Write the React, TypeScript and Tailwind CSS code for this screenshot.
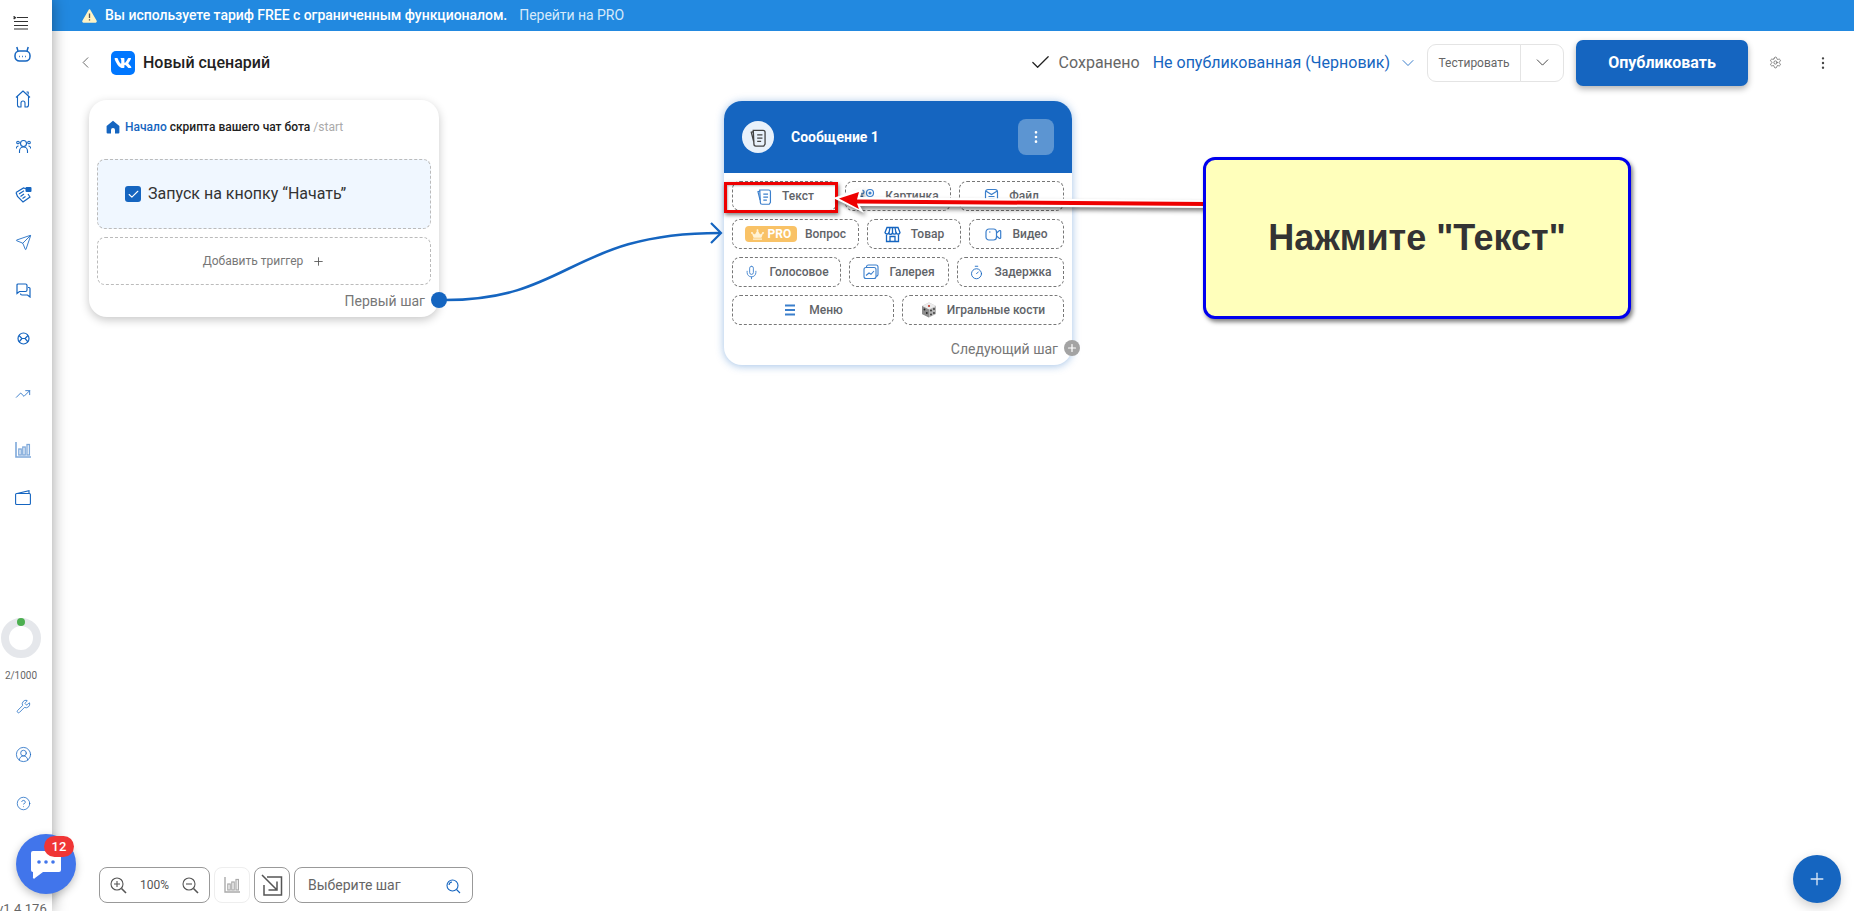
import React from 'react';
import {
  Check,
  ChevronDown,
  ChevronLeft,
  CircleHelp,
  CircleUserRound,
  EllipsisVertical,
  Plus,
  Send,
  Settings,
  Timer,
  TrendingUp,
  Wrench,
  Mic,
} from 'lucide-react';
import { FaVk, FaCrown } from 'react-icons/fa';

const ICON = 'text-[#1565c0]';

function DocStack({ size = 16, className = '' }: { size?: number; className?: string }) {
  return (
    <svg width={size} height={size} viewBox="0 0 16 16" fill="none" stroke="currentColor" strokeWidth="1" className={className}>
      <path d="M4 2.5h7.5a1.5 1.5 0 0 1 1.5 1.5v9l-1 1.5H6a1.5 1.5 0 0 1-1.5-1.5z" />
      <path d="M4.3 3.5 2.5 4l1.8 7" />
      <path d="M7 6h4M7 8.5h4M7 11h3" />
    </svg>
  );
}

function PictureIcon({ className = '' }: { className?: string }) {
  return (
    <svg width="18" height="16" viewBox="0 0 18 16" fill="none" stroke="currentColor" strokeWidth="1.2" className={className}>
      <path d="M1 13l4-5 4 5" />
      <circle cx="5" cy="4" r="2" />
      <circle cx="13" cy="5" r="3.5" />
      <circle cx="13" cy="5" r="1" fill="currentColor" />
      <path d="M1 14.5h14" />
    </svg>
  );
}

function FileIcon({ className = '' }: { className?: string }) {
  return (
    <svg width="15" height="16" viewBox="0 0 15 16" fill="none" stroke="currentColor" strokeWidth="1.2" className={className}>
      <rect x="1.5" y="1.5" width="12" height="13" rx="2.5" />
      <path d="M1.8 3 7.5 6.5 13.2 3" />
      <path d="M4.5 8.5h6M4.5 11h6" />
    </svg>
  );
}

function StoreIcon({ className = '' }: { className?: string }) {
  return (
    <svg width="17" height="17" viewBox="0 0 17 17" fill="none" stroke="currentColor" strokeWidth="1.3" className={className}>
      <path d="M3 1.5h11l2 5a2 2 0 0 1-3.7.6 2.2 2.2 0 0 1-3.8 0 2.2 2.2 0 0 1-3.9 0A2 2 0 0 1 1 6.5z" />
      <path d="M6 1.5 5 7M11 1.5l1 5.5M8.5 1.5V7" />
      <path d="M2.5 8.5V15.5h12V8.5" />
      <path d="M6 15.5v-5h5v5" />
    </svg>
  );
}

function VideoIcon({ className = '' }: { className?: string }) {
  return (
    <svg width="17" height="13" viewBox="0 0 17 13" fill="none" stroke="currentColor" strokeWidth="1.2" className={className}>
      <rect x="1" y="1" width="10.5" height="11" rx="3" />
      <path d="M4 4h1.5" />
      <path d="M11.5 5 14.5 2.6a.8.8 0 0 1 1.2.6v6.6a.8.8 0 0 1-1.2.6L11.5 8" />
    </svg>
  );
}

function GalleryIcon({ className = '' }: { className?: string }) {
  return (
    <svg width="16" height="16" viewBox="0 0 16 16" fill="none" stroke="currentColor" strokeWidth="1.1" className={className}>
      <rect x="1" y="3.5" width="12" height="11" rx="2" />
      <path d="M3.5 3.5V2.8A1.8 1.8 0 0 1 5.3 1H13a2 2 0 0 1 2 2v7.5a1.8 1.8 0 0 1-2 1.7" />
      <path d="M3 11.5 6 9l2 1.3L11 7" />
    </svg>
  );
}

function Bars({ size = 14, className = '' }: { size?: number; className?: string }) {
  return (
    <svg width={size} height={size} viewBox="0 0 14 14" fill="none" stroke="currentColor" strokeWidth="1.8" className={className}>
      <path d="M2 2.5h10M2 7h10M2 11.5h10" />
    </svg>
  );
}

function Dice() {
  return (
    <svg width="16" height="16" viewBox="0 0 16 16">
      <path d="M8 .5l7 3.5v8l-7 3.5-7-3.5V4z" fill="#b5b5b5" />
      <path d="M8 .5l7 3.5-7 3.5L1 4z" fill="#ececec" />
      <path d="M8 7.5v8l-7-3.5V4z" fill="#8c8c8c" />
      <circle cx="8" cy="4" r="1.1" fill="#c0392b" />
      <circle cx="3.5" cy="7.5" r="0.9" fill="#222" />
      <circle cx="5.8" cy="11" r="0.9" fill="#222" />
      <circle cx="10" cy="8.5" r="0.9" fill="#333" />
      <circle cx="13" cy="7" r="0.9" fill="#333" />
      <circle cx="10" cy="12.5" r="0.9" fill="#333" />
      <circle cx="13" cy="11" r="0.9" fill="#333" />
    </svg>
  );
}

function Chip({ width, icon, label, gap = 'gap-[10px]' }: { width: string; icon: React.ReactNode; label: string; gap?: string }) {
  return (
    <div
      className={`${width} ${gap} h-[30px] shrink-0 flex items-center justify-center rounded-lg border border-dashed border-[#777] text-[12px] font-medium text-[#5f6368]`}
    >
      {icon}
      <span>{label}</span>
    </div>
  );
}

function Sidebar() {
  return (
    <aside className="relative z-10 w-[52px] h-full shrink-0 bg-white shadow-[1px_0_14px_rgba(0,0,0,0.35)] flex flex-col items-center pr-[6px]">
      <svg width="16" height="14" viewBox="0 0 16 14" fill="none" stroke="#333" strokeWidth="1.1" className="mt-[16px] -ml-[4px] shrink-0">
        <path d="M4 1.5h11M1 5.5h14M1 9.5h14M1 13h14" />
        <path d="M.7 .3 2.6 1.7.7 3" fill="#333" />
      </svg>
      <svg width="17" height="16" viewBox="0 0 17 16" fill="none" stroke="#1565c0" strokeWidth="1.5" className="mt-[16px] -ml-[2px] shrink-0">
        <rect x="1" y="5" width="15" height="10" rx="4.5" />
        <path d="M4 5 2.8 1M13 5l1.2-4" />
        <path d="M5 10.5h.8M8 10.5h.8M11 10.5h.8" />
      </svg>
      <div className={`${ICON} mt-[28px] flex flex-col items-center`}>
        <div className="h-[18px] flex items-center">
          <svg width="16" height="18" viewBox="0 0 16 18" fill="none" stroke="currentColor" strokeWidth="1.1" strokeLinejoin="round">
            <path d="M1 7.5 8 1l7 6.5M2.5 6.5V15a2 2 0 0 0 2 2H6v-4a2 2 0 0 1 4 0v4h1.5a2 2 0 0 0 2-2V6.5" />
            <path d="M11.5 2h1.7v2.5" />
          </svg>
        </div>
        <div className="h-[29px]" />
        <div className="h-[18px] flex items-center">
          <svg width="15" height="15" viewBox="0 0 15 15" fill="none" stroke="currentColor" strokeWidth="1.1">
            <circle cx="7.5" cy="4.5" r="3" />
            <path d="M3.5 14v-2a4 4 0 0 1 8 0v2" />
            <circle cx="2" cy="3.5" r="1.3" />
            <circle cx="13" cy="3.5" r="1.3" />
            <path d="M.5 9.5A2 2 0 0 1 2.5 7M14.5 9.5a2 2 0 0 0-2-2.500" />
          </svg>
        </div>
        <div className="h-[30px]" />
        <div className="h-[18px] flex items-center">
          <svg width="17" height="17" viewBox="0 0 17 17" fill="none" stroke="currentColor" strokeWidth="1.2">
            <path d="M1 6.500 8.500 2 11 2.800M1 6.500 2.500 10.500 8 16 15 11 13 8" />
            <path d="M4 8 9 4.800M5.500 10.500l3.500-2.500M7.500 12.500l3-2" />
            <rect x="10.500" y="1" width="6" height="5" rx="1" fill="currentColor" stroke="none" />
          </svg>
        </div>
        <div className="h-[30px]" />
        <div className="h-[18px] flex items-center"><Send size={17} strokeWidth={1.2} /></div>
        <div className="h-[30px]" />
        <div className="h-[18px] flex items-center">
          <svg width="15" height="15" viewBox="0 0 15 15" fill="none" stroke="currentColor" strokeWidth="1.2">
            <path d="M2 1h7.500a1.500 1.500 0 0 1 1.500 1.500V7a1.500 1.500 0 0 1-1.500 1.500H3.500L1 10.500V2a1 1 0 0 1 1-1z" />
            <path d="M12 4.500h1a1 1 0 0 1 1 1V14l-2.500-2H6a1.500 1.500 0 0 1-1.500-1.500" />
          </svg>
        </div>
        <div className="h-[30px]" />
        <div className="h-[18px] flex items-center">
          <svg width="13" height="13" viewBox="0 0 13 13" fill="none" stroke="currentColor" strokeWidth="1.2">
            <circle cx="6.500" cy="6.500" r="5.500" />
            <path d="M2 3.500 5 6.500l-3 3.500M11 3.500 8 6.500l3 3.500M5 6.500h3" />
          </svg>
        </div>
        <div className="h-[38px]" />
        <div className="h-[18px] flex items-center"><TrendingUp size={16} strokeWidth={1.2} /></div>
        <div className="h-[38px]" />
        <div className="h-[18px] flex items-center">
          <svg width="16" height="16" viewBox="0 0 16 16" fill="none" stroke="#7ea8da" strokeWidth="1.3">
            <path d="M1 0v15h15" strokeWidth="1.600" />
            <rect x="3.800" y="7" width="2.400" height="6" />
            <rect x="7.800" y="5" width="2.400" height="8" />
            <rect x="12" y="2.500" width="2.400" height="10.500" />
          </svg>
        </div>
        <div className="h-[29px]" />
        <div className="h-[18px] flex items-center">
          <svg width="16" height="15" viewBox="0 0 16 15" fill="none" stroke="currentColor" strokeWidth="1.1">
            <rect x="0.600" y="3.500" width="14.800" height="11" rx="1" />
            <path d="M2 3.500 14 .8V3.500" />
          </svg>
        </div>
      </div>

      <div className="mt-auto w-full flex flex-col items-center pb-[100px]">
        <div className="relative -ml-[4px] w-[40px] h-[40px] rounded-full border-[8px] border-[#e5e7eb]">
          <div className="absolute -top-[8px] left-[8px] w-[8px] h-[8px] rounded-full bg-[#4caf50]" />
        </div>
        <div className="-ml-[4px] mt-[11px] text-[10px] leading-[14px] text-[#666]">2/1000</div>
        <Wrench size={15} strokeWidth={1.2} className={`${ICON} mt-[16px]`} />
        <CircleUserRound size={17} strokeWidth={1.1} className={`${ICON} mt-[32px]`} />
        <CircleHelp size={15} strokeWidth={1.2} className={`${ICON} mt-[33px]`} />
      </div>
    </aside>
  );
}

function Header() {
  return (
    <header className="h-[59px] shrink-0 flex items-center pt-[4px] pl-[24px] pr-[23px] bg-white">
      <ChevronLeft size={19} strokeWidth={1.1} className="text-[#555]" />
      <div className="ml-[16px] w-[24px] h-[24px] rounded-[5px] bg-[#0077ff] flex items-center justify-center">
        <FaVk size={18} className="text-white" />
      </div>
      <h1 className="ml-[8px] text-[16px] font-medium text-[#222]">Новый сценарий</h1>

      <div className="ml-auto flex items-center">
        <Check size={23} strokeWidth={1.3} className="text-[#222]" />
        <span className="ml-[7px] text-[16px] text-[#666]">Сохранено</span>
        <span className="ml-[13px] text-[16px] text-[#1565c0]">Не опубликованная (Черновик)</span>
        <ChevronDown size={20} strokeWidth={1} className="ml-[8px] text-[#1565c0]" />
        <div className="ml-[9px] w-[94px] h-[38px] rounded-l-[9px] border border-[#e4e4e4] flex items-center justify-center text-[12px] text-[#666]">
          Тестировать
        </div>
        <div className="w-[44px] h-[38px] -ml-px rounded-r-[9px] border border-[#e4e4e4] flex items-center justify-center">
          <ChevronDown size={21} strokeWidth={1} className="text-[#333]" />
        </div>
        <button className="ml-[12px] w-[172px] h-[46px] rounded-[7px] bg-[#1565c0] text-[16px] font-bold text-white shadow-[0_3px_6px_rgba(0,0,0,0.3)]">
          Опубликовать
        </button>
        <Settings size={13} strokeWidth={1.3} className="ml-[21px] text-[#555]" />
        <EllipsisVertical size={16} strokeWidth={1.6} className="ml-[33px] text-[#444]" />
      </div>
    </header>
  );
}

function StartNode() {
  return (
    <div className="absolute left-[37px] top-[10px] w-[350px] h-[217px] rounded-[18px] bg-white shadow-[0_3px_10px_rgba(0,0,0,0.22)] px-[8px]">
      <div className="h-[59px] pb-[6px] flex items-center pl-[9px] text-[12px] font-medium text-[#222]">
        <svg width="14" height="14" viewBox="0 0 14 14" className="mr-[5px] text-[#1565c0]" fill="currentColor">
          <path d="M7 .8 13.400 6v6.500a1 1 0 0 1-1 1H9V10a2 2 0 0 0-4 0v3.500H1.600a1 1 0 0 1-1-1V6z" />
        </svg>
        <span className="text-[#1565c0]">Начало</span>
        <span className="ml-[3px]">скрипта вашего чат бота</span>
        <span className="ml-[3px] font-normal text-[#aaa]">/start</span>
      </div>
      <div className="h-[70px] rounded-lg border border-dashed border-[#bbb] bg-[#f0f7ff] flex items-center pl-[27px] text-[16px] text-[#333]">
        <span className="w-[16px] h-[16px] rounded-[3px] bg-[#1565c0] flex items-center justify-center mr-[7px]">
          <Check size={13} strokeWidth={2} className="text-white" />
        </span>
        Запуск на кнопку “Начать”
      </div>
      <div className="mt-[8px] h-[48px] rounded-lg border border-dashed border-[#bbb] flex items-center justify-center gap-[9px] text-[12px] text-[#777]">
        Добавить триггер
        <Plus size={13} strokeWidth={1.6} className="text-[#555]" />
      </div>
      <div className="mt-[6px] pr-[6px] text-right text-[14px] leading-[20px] text-[#777]">Первый шаг</div>
      <div className="absolute -right-[8px] top-[192px] w-[16px] h-[16px] rounded-full bg-[#1565c0]" />
    </div>
  );
}

function MessageNode() {
  const blue = 'text-[#3b7fcc]';
  return (
    <div className="absolute left-[672px] top-[11px] w-[348px] h-[264px] rounded-[18px] bg-white shadow-[0_1px_8px_rgba(21,101,192,0.4)]">
      <div className="h-[72px] rounded-t-[18px] bg-[#1565c0] flex items-center pl-[18px] pr-[18px]">
        <div className="w-[32px] h-[32px] rounded-full bg-[#e8f1fb] flex items-center justify-center">
          <DocStack size={21} className="text-[#444]" />
        </div>
        <span className="ml-[17px] text-[14px] font-bold text-white">Сообщение 1</span>
        <div className="ml-auto w-[36px] h-[36px] rounded-lg bg-[#5c95d2] flex items-center justify-center">
          <EllipsisVertical size={16} strokeWidth={2} className="text-white" />
        </div>
      </div>
      <div className="px-[8px] pt-[8px] flex flex-col gap-[8px]">
        <div className="flex gap-[8px]">
          <Chip width="w-[105px]" gap="gap-[8px]" icon={<DocStack size={19} className={blue} />} label="Текст" />
          <Chip width="w-[106px]" icon={<PictureIcon className={blue} />} label="Картинка" />
          <Chip width="w-[105px]" icon={<FileIcon className={blue} />} label="Файл" />
        </div>
        <div className="flex gap-[8px]">
          <div className="w-[127px] h-[30px] shrink-0 flex items-center justify-center gap-[8px] rounded-lg border border-dashed border-[#777] text-[12px] font-medium text-[#5f6368]">
            <span className="w-[52px] h-[16px] rounded-[4px] bg-[#f9c266] flex items-center justify-center gap-[4px] text-[12px] font-bold text-white">
              <FaCrown size={13} className="text-[#fff3d6]" />
              PRO
            </span>
            Вопрос
          </div>
          <Chip width="w-[94px]" icon={<StoreIcon className="text-[#1565c0]" />} label="Товар" />
          <Chip width="w-[95px]" icon={<VideoIcon className={blue} />} label="Видео" />
        </div>
        <div className="flex gap-[8px]">
          <Chip width="w-[109px]" icon={<Mic size={15} strokeWidth={1.4} className={blue} />} label="Голосовое" />
          <Chip width="w-[100px]" icon={<GalleryIcon className={blue} />} label="Галерея" />
          <Chip width="w-[107px]" icon={<Timer size={15} strokeWidth={1.4} className="text-[#1565c0]" />} label="Задержка" />
        </div>
        <div className="flex gap-[8px]">
          <Chip width="w-[162px]" gap="gap-[12px]" icon={<Bars className={blue} />} label="Меню" />
          <Chip width="w-[162px]" icon={<Dice />} label="Игральные кости" />
        </div>
      </div>
      <div className="mt-[14px] pr-[14px] text-right text-[14px] leading-[20px] text-[#777]">Следующий шаг</div>
      <div className="absolute -right-[8px] top-[239px] w-[16px] h-[16px] rounded-full bg-[#a3a3a3] flex items-center justify-center">
        <Plus size={12} strokeWidth={2.4} className="text-white" />
      </div>
    </div>
  );
}

function Toolbar() {
  return (
    <div className="absolute left-[47px] bottom-[8px] flex gap-[4px] text-[#666]">
      <div className="w-[111px] h-[36px] rounded-lg border border-[#999] bg-white flex items-center justify-between px-[10px]">
        <svg width="17" height="17" viewBox="0 0 17 17" fill="none" stroke="#555" strokeWidth="1.1">
          <circle cx="7" cy="7" r="6" />
          <path d="M7 4v6M4 7h6" />
          <path d="M11.500 11.500 16 16" strokeWidth="1.600" />
        </svg>
        <span className="text-[12px] text-[#555]">100%</span>
        <svg width="17" height="17" viewBox="0 0 17 17" fill="none" stroke="#555" strokeWidth="1.1">
          <circle cx="7" cy="7" r="6" />
          <path d="M4 7h6" />
          <path d="M11.500 11.500 16 16" strokeWidth="1.600" />
        </svg>
      </div>
      <div className="w-[36px] h-[36px] rounded-lg border border-[#eee] bg-white flex items-center justify-center">
        <svg width="16" height="16" viewBox="0 0 16 16" fill="none" stroke="#aaa" strokeWidth="1.2">
          <path d="M1 0v15h15" strokeWidth="1.400" />
          <rect x="3.800" y="7" width="2.400" height="6" />
          <rect x="7.800" y="5" width="2.400" height="8" />
          <rect x="12" y="2.500" width="2.400" height="10.500" />
        </svg>
      </div>
      <div className="w-[36px] h-[36px] rounded-lg border border-[#999] bg-white flex items-center justify-center">
        <svg width="22" height="22" viewBox="0 0 22 22" fill="none" stroke="#555" strokeWidth="1.500">
          <path d="M6 3h14.500v18H3V11" />
          <path d="M1 1l15 15M16 7.500V16H7.500" />
        </svg>
      </div>
      <div className="w-[179px] h-[36px] rounded-lg border border-[#999] bg-white flex items-center justify-between pl-[13px] pr-[11px] text-[14px] text-[#666]">
        Выберите шаг
        <svg width="15" height="15" viewBox="0 0 15 15" fill="none" stroke="#1565c0" strokeWidth="1.100" className="mt-[2px]">
          <circle cx="6.500" cy="6.500" r="5.500" />
          <path d="M10.500 10.500 14 14" />
          <path d="M3 6a3.500 3.500 0 0 1 3-3" />
        </svg>
      </div>
    </div>
  );
}

function Annotation() {
  return (
    <>
      <div className="absolute left-[672px] top-[92px] w-[114px] h-[31px] border-[3px] border-[#ee0000] shadow-[1px_2px_4px_rgba(0,0,0,0.5),inset_1px_1px_2px_rgba(0,0,0,0.25)]" />
      <svg
        className="absolute inset-0 w-full h-full pointer-events-none drop-shadow-[2px_3px_2px_rgba(0,0,0,0.5)]"
        viewBox="52 90 1802 821"
      >
        <path d="M833 198 L863 188 L860 197 L1206 200 Q1209 204 1206 208 L860 206 L864 213 Z" fill="#fff" />
        <path d="M839 198.500 L859 192 L857 199.500 L1206 202 L1206 206 L857 203.500 L859 209 Z" fill="#ee0000" />
      </svg>
      <div className="absolute left-[1151px] top-[67px] w-[428px] h-[162px] rounded-[12px] border-[3px] border-[#0000ee] bg-[#ffffbb] shadow-[2px_3px_4px_rgba(0,0,0,0.5)] flex items-center justify-center font-['Liberation_Sans',sans-serif] text-[36px] font-bold text-[#333]">
        Нажмите "Текст"
      </div>
    </>
  );
}

export default function App() {
  return (
    <div className="relative flex w-full h-[911px] overflow-hidden bg-white font-['Roboto',sans-serif]">
      <Sidebar />
      <main className="flex-1 flex flex-col min-w-0">
        <div className="h-[31px] shrink-0 bg-[#2289e0] flex items-center pl-[30px] text-[14px] font-medium tracking-[-0.04px] text-white">
          <svg width="15" height="14" viewBox="0 0 15 14">
            <path d="M7.500 1 14 12.200a.6.6 0 0 1-.5.8h-12a.6.6 0 0 1-.5-.8z" fill="#fff3c4" stroke="#fff3c4" strokeWidth="1.500" strokeLinejoin="round" />
            <path d="M7.500 4.500v4.500M7.500 10.200v1.200" stroke="#555" strokeWidth="1.300" />
          </svg>
          <span className="ml-[8px]">Вы используете тариф FREE с ограниченным функционалом.</span>
          <span className="ml-[12px] font-normal text-[#d6e9fa]">Перейти на PRO</span>
        </div>
        <Header />
        <div className="relative flex-1">
          <svg className="absolute inset-0 w-full h-full pointer-events-none" viewBox="52 90 1802 821" fill="none">
            <path d="M445 300 C570 300 570 233 720 233" stroke="#1565c0" strokeWidth="2.600" />
            <path d="M711 223 L721 233 L711 243" stroke="#1565c0" strokeWidth="2.200" />
          </svg>
          <StartNode />
          <MessageNode />
          <Annotation />
          <Toolbar />
          <button className="absolute right-[13px] bottom-[8px] w-[48px] h-[48px] rounded-full bg-[#1565c0] shadow-[0_4px_12px_rgba(0,0,0,0.2)] flex items-center justify-center">
            <Plus size={20} strokeWidth={1.6} className="text-[#dbe8f6]" />
          </button>
        </div>
      </main>
      <div className="absolute z-20 left-[16px] top-[834px] w-[60px] h-[60px] rounded-full bg-[#4175eb] shadow-[0_3px_8px_rgba(0,0,0,0.25)] flex items-center justify-center">
        <svg width="32" height="32" viewBox="0 0 32 32" className="mt-[2px]">
          <path d="M3 2h26a2 2 0 0 1 2 2v17a2 2 0 0 1-2 2H13l-8 6a1 1 0 0 1-2-1v-5a2 2 0 0 1-2-2V4a2 2 0 0 1 2-2z" fill="#fff" />
          <circle cx="9" cy="13" r="1.800" fill="#4175eb" />
          <circle cx="16" cy="13" r="1.800" fill="#4175eb" />
          <circle cx="23" cy="13" r="1.800" fill="#4175eb" />
        </svg>
        <span className="absolute top-[2px] left-[28px] w-[30px] h-[21px] rounded-full bg-[#f03535] flex items-center justify-center text-[13px] font-medium text-white">
          12
        </span>
      </div>
      <div className="absolute z-20 left-[-3px] top-[901px] text-[13px] leading-[16px] text-[#666]">v1.4.176</div>
    </div>
  );
}
